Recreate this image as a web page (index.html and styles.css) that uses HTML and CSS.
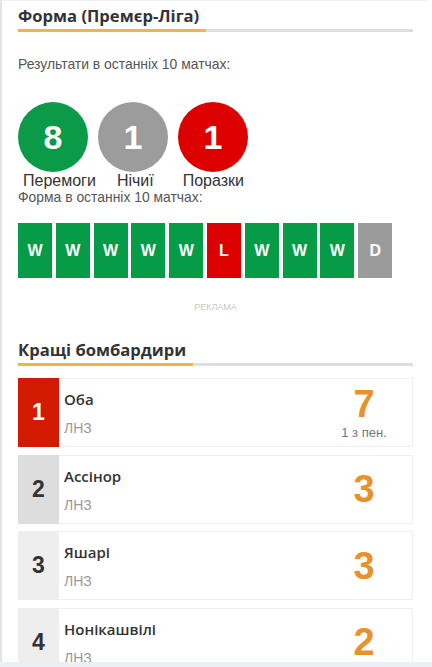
FILE: index.html
```html
<!DOCTYPE html>
<html lang="uk">
<head>
<meta charset="utf-8">
<title>Форма</title>
<link rel="stylesheet" href="styles.css">
</head>
<body>
<div class="page">
  <div class="section-title"><h2>Форма (Премєр-Ліга)</h2></div>
  <p class="note first">Результати в останніх 10 матчах:</p>
  <div class="summary">
    <div class="circle win">8</div>
    <div class="circle draw">1</div>
    <div class="circle loss">1</div>
  </div>
  <div class="labels">
    <span class="lab l1">Перемоги</span>
    <span class="lab l2">Нічиї</span>
    <span class="lab l3">Поразки</span>
  </div>
  <p class="note second">Форма в останніх 10 матчах:</p>
  <div class="form">
    <span class="box w">W</span><span class="box w">W</span><span class="box w">W</span><span class="box w">W</span><span class="box w">W</span><span class="box l">L</span><span class="box w">W</span><span class="box w">W</span><span class="box w">W</span><span class="box d">D</span>
  </div>
  <div class="ad">РЕКЛАМА</div>
  <div class="section-title scorers-title"><h2>Кращі бомбардири</h2></div>
  <div class="scorers">
    <div class="row">
      <div class="rank top">1</div>
      <div class="info"><div class="name">Оба</div><div class="team">ЛНЗ</div></div>
      <div class="goals"><div class="num">7</div><div class="pen">1 з пен.</div></div>
    </div>
    <div class="row">
      <div class="rank second-rank">2</div>
      <div class="info"><div class="name">Ассінор</div><div class="team">ЛНЗ</div></div>
      <div class="goals"><div class="num">3</div></div>
    </div>
    <div class="row">
      <div class="rank">3</div>
      <div class="info"><div class="name">Яшарі</div><div class="team">ЛНЗ</div></div>
      <div class="goals"><div class="num">3</div></div>
    </div>
    <div class="row">
      <div class="rank">4</div>
      <div class="info"><div class="name">Нонікашвілі</div><div class="team">ЛНЗ</div></div>
      <div class="goals"><div class="num">2</div></div>
    </div>
  </div>
</div>
<div class="bottom-bar"></div>
</body>
</html>
```
FILE: styles.css
```css
html, body {
  margin: 0;
  padding: 0;
  height: 667px;
  overflow: hidden;
  background: #fff;
}
body {
  font-family: "Liberation Sans", Arial, sans-serif;
  color: #333;
  position: relative;
}
.page {
  border-left: 2px solid #e4e4e4;
  border-top: 1px solid #f0f0f0;
  margin-right: 4px;
  padding: 0 15px 0 16px;
}
.section-title {
  border-bottom: 3px solid #dedede;
  margin-top: 3px;
}
.section-title h2 {
  display: inline-block;
  margin: 0 0 -3px 0;
  padding: 0 7px 1px 0;
  border-bottom: 3px solid #f2b443;
  font-family: "Open Sans", sans-serif;
  font-weight: 700;
  font-size: 16.6px;
  line-height: 24px;
  color: #333;
}
.note {
  margin: 0;
  font-size: 13.9px;
  line-height: 16px;
  color: #555;
}
.note.first { margin-top: 24px; }
.summary {
  display: flex;
  gap: 10px;
  margin-top: 30px;
}
.circle {
  width: 70px;
  height: 70px;
  border-radius: 50%;
  display: flex;
  align-items: center;
  justify-content: center;
  color: #fff;
  font-weight: 700;
  font-size: 34px;
}
.circle.win { background: #0a9a48; }
.circle.draw { background: #9c9c9c; }
.circle.loss { background: #dc0000; }
.labels {
  display: flex;
  font-size: 16px;
  line-height: 17px;
  color: #333;
  margin-top: 0;
}
.lab.l1 { margin-left: 5px; }
.lab.l2 { margin-left: 21px; }
.lab.l3 { margin-left: 29px; }
.note.second { margin-top: 0; }
.form {
  display: flex;
  gap: 3.8px;
  margin-top: 18px;
}
.box {
  width: 34px;
  height: 55px;
  display: flex;
  align-items: center;
  justify-content: center;
  color: #fff;
  font-weight: 700;
  font-size: 16px;
}
.box.w { background: #069c47; }
.box.l { background: #dd0000; }
.box.d { background: #9b9b9b; }
.ad {
  text-align: center;
  font-size: 9px;
  line-height: 12px;
  color: #c8c8c8;
  margin-top: 23px;
}
.scorers-title { margin-top: 25px; }
.scorers {
  display: flex;
  flex-direction: column;
  gap: 7.5px;
  margin-top: 12px;
}
.row {
  display: flex;
  box-sizing: border-box;
  height: 69px;
  border: 1px solid #efefef;
  border-left: none;
}
.rank {
  width: 41px;
  flex: none;
  margin-top: -1px;
  margin-bottom: -1px;
  background: #eeeeee;
  display: flex;
  align-items: center;
  justify-content: center;
  font-weight: 700;
  font-size: 23px;
  color: #333;
}
.rank.top { background: #d21a00; color: #fff; }
.rank.second-rank { background: #dddddd; }
.info {
  flex: 1;
  padding: 10px 0 0 5px;
}
.name {
  font-family: "Open Sans", sans-serif;
  font-weight: 600;
  font-size: 15px;
  line-height: 20px;
  color: #333;
}
.team {
  margin-top: 9px;
  font-size: 14px;
  line-height: 20px;
  color: #999;
}
.goals {
  width: 96px;
  flex: none;
  display: flex;
  flex-direction: column;
  align-items: center;
  justify-content: center;
}
.num {
  font-weight: 700;
  font-size: 38px;
  line-height: 38px;
  color: #e8922a;
}
.pen {
  font-size: 13px;
  line-height: 15px;
  color: #777;
  margin-top: 2px;
}
.bottom-bar {
  position: absolute;
  left: 0;
  right: 0;
  bottom: 0;
  height: 5px;
  background: #eceff3;
}
```
